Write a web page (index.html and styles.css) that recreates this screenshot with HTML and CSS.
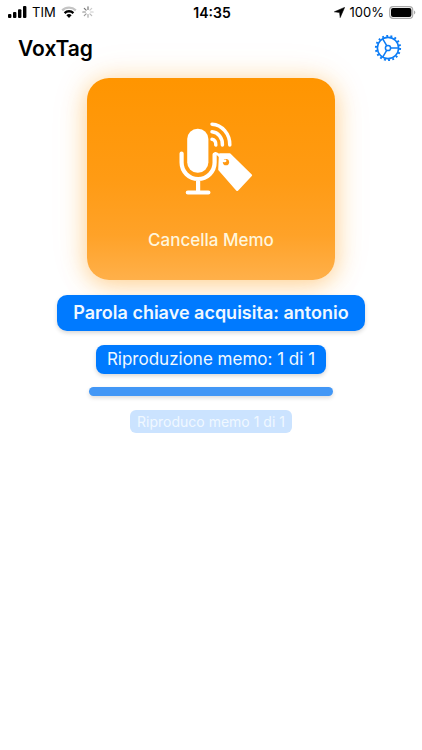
FILE: index.html
```html
<!DOCTYPE html>
<html lang="it">
<head>
<meta charset="utf-8">
<meta name="viewport" content="width=device-width, initial-scale=1">
<title>VoxTag</title>
<link rel="stylesheet" href="styles.css">
</head>
<body>
<div class="status">
  <div class="status-side">
    <svg class="signal" viewBox="0 0 19 12" aria-hidden="true"><rect x="0" y="8" width="3.4" height="4" rx="1"/><rect x="5" y="6" width="3.4" height="6" rx="1"/><rect x="10" y="3.2" width="3.4" height="8.8" rx="1"/><rect x="15" y="0" width="3.4" height="12" rx="1"/></svg>
    <span class="carrier">TIM</span>
    <svg class="wifi" viewBox="0 0 16 12" aria-hidden="true"><path d="M1.2 4.4a9.7 9.7 0 0 1 13.6 0" fill="none" stroke="#c4c4c4" stroke-width="2.2"/><path d="M3.6 7.1a6.2 6.2 0 0 1 8.8 0" fill="none" stroke="#000" stroke-width="2.3"/><path d="M5.4 9.3a3.7 3.7 0 0 1 5.2 0L8 12z"/></svg>
    <svg class="spinner" viewBox="0 0 12 12" fill="none" stroke-width="1.2" stroke-linecap="round" aria-hidden="true"><path d="M6 .8v2.6" stroke="#777"/><path d="M9.7 2.3 7.9 4.1" stroke="#ccc"/><path d="M11.2 6H8.6" stroke="#ccc"/><path d="M9.7 9.7 7.9 7.9" stroke="#bbb"/><path d="M6 11.2V8.6" stroke="#aaa"/><path d="M2.3 9.7l1.8-1.8" stroke="#999"/><path d="M.8 6h2.6" stroke="#888"/><path d="m2.3 2.3 1.8 1.8" stroke="#777"/></svg>
  </div>
  <time class="clock">14:35</time>
  <div class="status-side status-right">
    <svg class="location" viewBox="0 0 11 11" aria-hidden="true"><path d="M10.6.4 6.2 10.6 5.6 5.5.4 4.8z" stroke="#000" stroke-width=".6" stroke-linejoin="round"/></svg>
    <span>100%</span>
    <svg class="battery" viewBox="0 0 27 13" aria-hidden="true"><rect x=".7" y=".7" width="23" height="11.6" rx="3.4" fill="none" stroke="#aaa" stroke-width="1.2"/><rect x="2" y="2" width="20.4" height="9" rx="2"/><path d="M25 4.6c1.8.5 1.8 3.3 0 3.8z" fill="#aaa"/></svg>
  </div>
</div>
<header class="header">
  <h1 class="title">VoxTag</h1>
  <button class="settings" type="button" aria-label="Impostazioni">
    <svg viewBox="0 0 28 28" fill="none" stroke="#0c7cf5" aria-hidden="true"><circle cx="14" cy="14" r="12.1" stroke-width="2" stroke-dasharray="1.9 2.323"/><circle cx="14" cy="14" r="10.6" stroke-width="1.6"/><circle cx="14" cy="14" r="2.6" stroke-width="1.5"/><path d="M16.6 14h8M12.7 11.7l-4-6.9M12.7 16.3l-4 6.9" stroke-width="1.5"/></svg>
  </button>
</header>
<main class="main">
  <button class="card" type="button">
    <svg class="mic" viewBox="169 121 84 76" fill="none" stroke="#fff" stroke-linecap="round" stroke-linejoin="round" aria-hidden="true">
      <rect x="187.2" y="128.7" width="21.2" height="44" rx="10.4" fill="#fff" stroke="none"/>
      <path d="M181.6 153.5v9a16.5 16.5 0 0 0 33 0v-8M198.1 179.5v12M187.8 192.5h20.6" stroke-width="4.2"/>
      <path d="M212 124.2a18.6 20.5 0 0 1 17.8 20.8M212 131.8a10.8 12.5 0 0 1 10.4 13.2M212 139.3a4 5 0 0 1 3.8 5.7" stroke-width="3.5"/>
      <path d="M220 154.3h9.6l21.4 20.9-13.8 14.7-17.9-20.4z" fill="#fff" stroke-width="2.2"/>
      <circle cx="226" cy="162.2" r="3.1" fill="#ff9810" stroke="none"/>
      <path d="M215.4 153.2q3.5 1 6.3 5.6 1.5 2.6 3.5 2" stroke-width="2.4"/>
    </svg>
    <span class="card-label">Cancella Memo</span>
  </button>
  <p class="pill keyword">Parola chiave acquisita: antonio</p>
  <p class="pill playback">Riproduzione memo: 1 di 1</p>
  <div class="progress" role="progressbar" aria-label="Avanzamento" aria-valuemin="0" aria-valuemax="100" aria-valuenow="100"></div>
  <p class="pill toast">Riproduco memo 1 di 1</p>
</main>
</body>
</html>
```
FILE: styles.css
```css
* {
  box-sizing: border-box;
}

body {
  margin: 0;
  min-height: 100vh;
  background: #fff;
  color: #000;
  font-family: Inter, "Liberation Sans", sans-serif;
}

h1,
p {
  margin: 0;
}

button {
  border: 0;
  padding: 0;
  font: inherit;
  cursor: pointer;
}

svg {
  display: block;
  flex: none;
}

.status {
  display: flex;
  align-items: center;
  height: 24px;
  padding: 0 6px 0 8px;
  font-size: 13px;
}

.status-side {
  display: flex;
  flex: 1;
  align-items: center;
  gap: 5px;
}

.status-right {
  justify-content: flex-end;
}

.clock {
  font-size: 14px;
  font-weight: 600;
}

.signal {
  width: 19px;
  height: 12px;
}

.wifi {
  width: 16px;
  height: 12px;
}

.spinner {
  width: 12px;
  height: 12px;
}

.location {
  width: 11px;
  height: 11px;
}

.battery {
  width: 27px;
  height: 13px;
}

.header {
  display: flex;
  align-items: center;
  justify-content: space-between;
  height: 48px;
  padding: 0 20px 0 18px;
}

.title {
  font-size: 21px;
  font-weight: 600;
}

.settings {
  background: none;
}

.settings svg {
  width: 28px;
  height: 28px;
}

.main {
  display: flex;
  flex-direction: column;
  align-items: center;
  padding-top: 6px;
}

.card {
  display: flex;
  flex-direction: column;
  align-items: center;
  gap: 32px;
  width: 58.6%;
  padding: 43px 0 28px;
  border-radius: 22px;
  background: linear-gradient(#ff9500, #ff9b14 50%, #ffa228 78%, #ffb04a);
  box-shadow: 0 4px 24px rgba(255, 149, 0, 0.42), 0 0 44px rgba(255, 149, 0, 0.08);
  color: #fff;
}

.mic {
  width: 84px;
  height: 76px;
}

.card-label {
  color: #fff6dc;
  font-size: 17px;
  font-weight: 500;
  line-height: 23px;
}

.pill {
  position: relative;
  background: #007aff;
  color: #f0f8ff;
  box-shadow: 0 2px 4px rgba(0, 0, 0, 0.16);
  text-align: center;
}

.keyword {
  margin-top: 15px;
  padding: 6px 16px;
  border-radius: 10px;
  font-size: 18px;
  font-weight: 600;
  line-height: 24px;
}

.playback {
  margin-top: 14px;
  padding: 4px 11px;
  border-radius: 8px;
  font-size: 17px;
  line-height: 21px;
}

.progress {
  width: 58%;
  height: 9px;
  margin-top: 13px;
  border-radius: 5px;
  background: #4297f6;
  box-shadow: 0 2px 4px rgba(0, 0, 0, 0.14);
}

.toast {
  margin-top: 14px;
  padding: 2px 7px;
  border-radius: 6px;
  background: #cbe3ff;
  box-shadow: none;
  font-size: 14px;
  line-height: 19px;
}
```
